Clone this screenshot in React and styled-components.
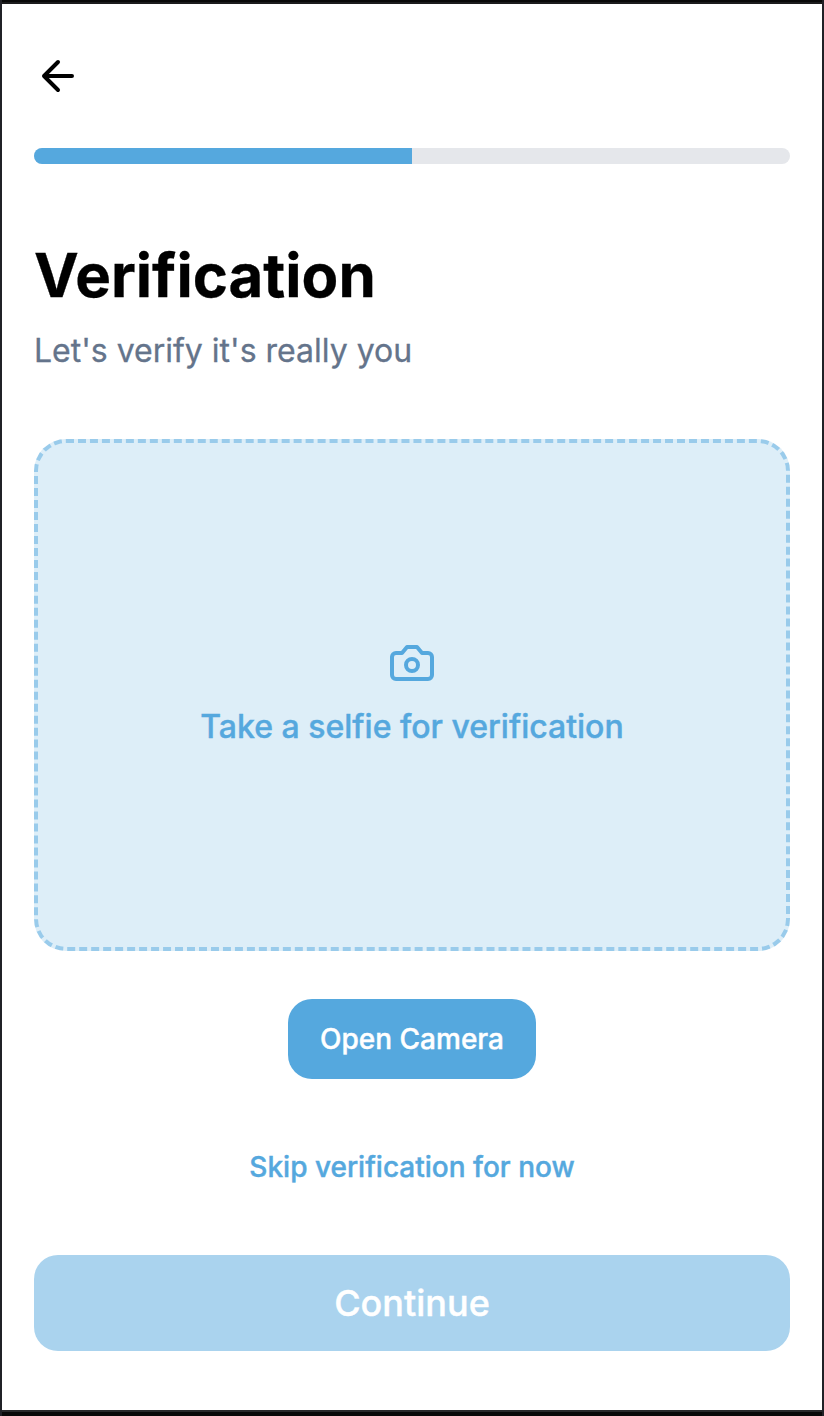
import React from "react";
import styled, { createGlobalStyle } from "styled-components";

const Global = createGlobalStyle`
  * { box-sizing: border-box; }
  body { margin: 0; background: #fff; font-family: Inter, sans-serif; -webkit-font-smoothing: antialiased; }
  button { font: inherit; border: 0; background: none; padding: 0; cursor: pointer; }
`;

const Frame = styled.div`
  height: 1416px;
  border: solid #202126;
  border-width: 0 2px;
`;

const Screen = styled.main`
  display: flex;
  flex-direction: column;
  height: 100%;
  padding: 46px 32px 0;
  background: #fff;
  border: solid #080808;
  border-width: 2px 0 4px;
  box-shadow: inset 0 2px #1b1b1c, inset 0 -2px #28282a;
`;

const BackButton = styled.button`
  display: flex;
  width: 48px;
  height: 56px;
  align-items: center;
  justify-content: center;
  color: #000;
`;

const Track = styled.div`
  height: 16px;
  margin-top: 44px;
  border-radius: 8px;
  background: #e5e7eb;
  overflow: hidden;
`;

const Fill = styled.div`
  width: 50%;
  height: 100%;
  background: #55a8de;
`;

const Title = styled.h1`
  margin: 71px 0 0;
  font-size: 60px;
  line-height: 80px;
  font-weight: 700;
  color: #000;
  -webkit-text-stroke: 0.3px currentColor;
`;

const Subtitle = styled.p`
  margin: 12px 0 0;
  font-size: 32px;
  line-height: 48px;
  color: #64748b;
  -webkit-text-stroke: 0.3px currentColor;
`;

const SelfieArea = styled.section`
  display: flex;
  flex-direction: column;
  align-items: center;
  justify-content: center;
  height: 512px;
  margin-top: 64px;
  border: 4px dashed #99cbeb;
  border-radius: 32px;
  background: #ddeef8;
  color: #55a8de;
`;

const SelfieLabel = styled.span`
  margin-top: 16px;
  font-size: 32px;
  line-height: 48px;
  font-weight: 500;
  -webkit-text-stroke: 0.4px currentColor;
`;

const CameraButton = styled.button`
  align-self: center;
  width: 248px;
  height: 80px;
  margin-top: 48px;
  border-radius: 24px;
  background: #55a8de;
  color: #fff;
  font-size: 28px;
  font-weight: 500;
  -webkit-text-stroke: 0.4px currentColor;
`;

const SkipButton = styled.button`
  align-self: center;
  height: 40px;
  margin-top: 68px;
  color: #55a8de;
  font-size: 28px;
  line-height: 40px;
  font-weight: 500;
  -webkit-text-stroke: 0.4px currentColor;
`;

const ContinueButton = styled.button`
  height: 96px;
  margin-top: 68px;
  border-radius: 24px;
  background: #aad3ee;
  color: #fff;
  font-size: 36px;
  font-weight: 500;
  -webkit-text-stroke: 0.4px currentColor;
`;

export default function App() {
  return (
    <>
      <Global />
      <Frame>
        <Screen>
          <BackButton aria-label="Back">
            <svg width="48" height="48" viewBox="0 0 24 24" fill="none" stroke="currentColor" strokeWidth="2" strokeLinecap="round" strokeLinejoin="round">
              <path d="M12 19l-7-7 7-7M19 12H5" />
            </svg>
          </BackButton>
          <Track><Fill /></Track>
          <Title>Verification</Title>
          <Subtitle>Let's verify it's really you</Subtitle>
          <SelfieArea>
            <svg width="48" height="48" viewBox="0 0 24 24" fill="none" stroke="currentColor" strokeWidth="2" strokeLinecap="round" strokeLinejoin="round">
              <path d="M14.5 4h-5L7 7H4a2 2 0 0 0-2 2v9a2 2 0 0 0 2 2h16a2 2 0 0 0 2-2V9a2 2 0 0 0-2-2h-3l-2.500-3z" />
              <circle cx="12" cy="13" r="3" />
            </svg>
            <SelfieLabel>Take a selfie for verification</SelfieLabel>
          </SelfieArea>
          <CameraButton>Open Camera</CameraButton>
          <SkipButton>Skip verification for now</SkipButton>
          <ContinueButton>Continue</ContinueButton>
        </Screen>
      </Frame>
    </>
  );
}
